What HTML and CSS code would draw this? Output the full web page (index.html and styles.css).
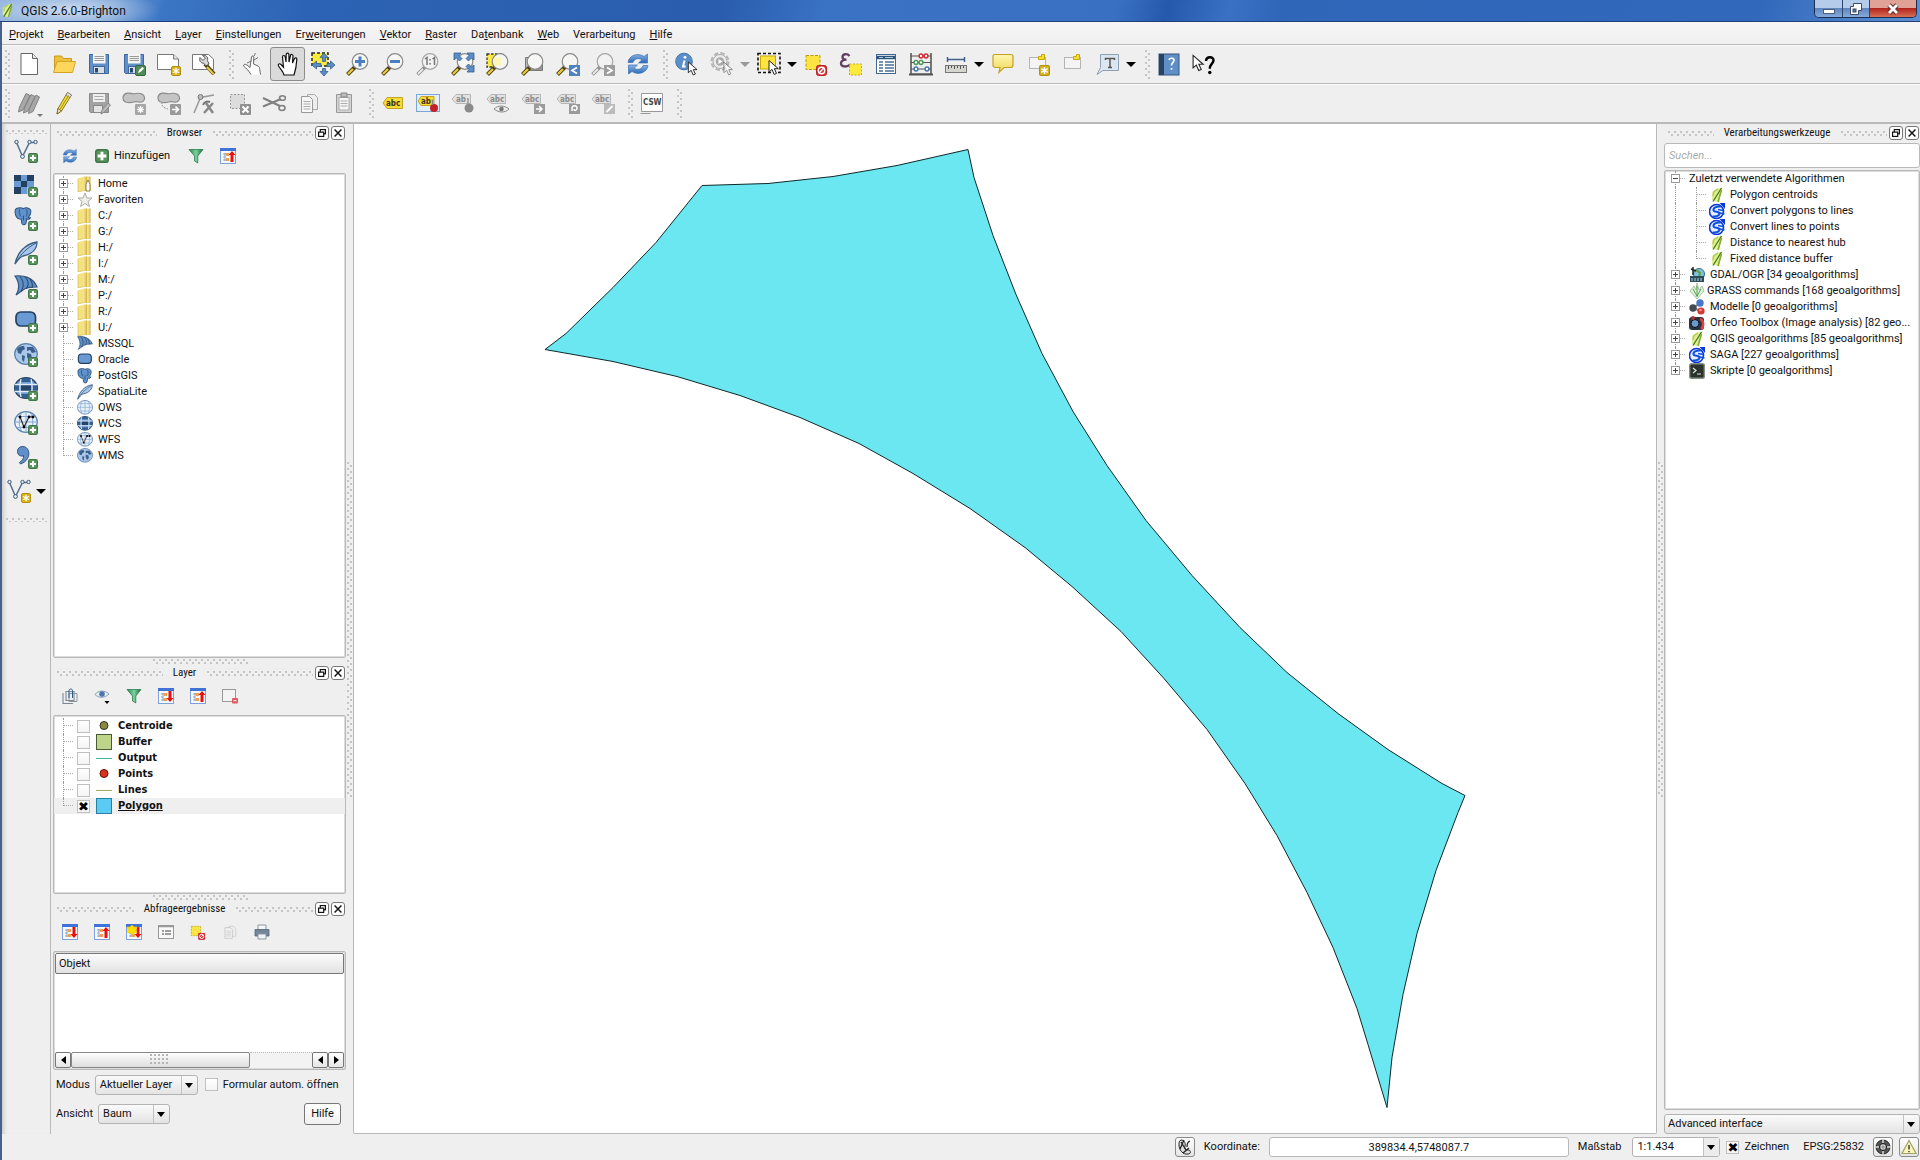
FILE: index.html
```html
<!DOCTYPE html>
<html lang="de">
<head>
<meta charset="utf-8">
<title>QGIS 2.6.0-Brighton</title>
<link rel="stylesheet" href="styles.css">
</head>
<body>
<svg class="defs" aria-hidden="true">
  <defs>
    <linearGradient id="g-fold" x1="0" x2="1" y1="0" y2="0"><stop offset="0" stop-color="#f5e58a"/><stop offset=".5" stop-color="#d2a93a"/><stop offset=".55" stop-color="#fbf0a8"/><stop offset="1" stop-color="#cfae3c"/></linearGradient>
    <linearGradient id="g-blue" x1="0" x2="0" y1="0" y2="1"><stop offset="0" stop-color="#8ab4e4"/><stop offset="1" stop-color="#2c66b4"/></linearGradient>
    <linearGradient id="g-green" x1="0" x2="1" y1="0" y2="0"><stop offset="0" stop-color="#1f8a50"/><stop offset=".5" stop-color="#7fd0a0"/><stop offset="1" stop-color="#146b3a"/></linearGradient>
    <linearGradient id="g-yel" x1="0" x2="0" y1="0" y2="1"><stop offset="0" stop-color="#fdf6b0"/><stop offset="1" stop-color="#f0d858"/></linearGradient>
  </defs>
  <!-- badges shared by several icons -->
  <symbol id="b-plus" viewBox="0 0 9 9"><rect x=".5" y=".5" width="8" height="8" rx="1.5" fill="#5a9560" stroke="#3f7547"/><path d="M4.5 1.7v5.6M1.7 4.5h5.6" stroke="#fff" stroke-width="1.8"/></symbol>
  <symbol id="b-star" viewBox="0 0 10 10"><rect x=".5" y=".5" width="9" height="9" rx="1.5" fill="#d8b21c" stroke="#b08f10"/><path d="M5 1.8v6.4M2 3.3l6 3.4M8 3.3 2 6.7" stroke="#fff" stroke-width="1.3"/></symbol>
  <symbol id="b-no" viewBox="0 0 11 11"><rect x=".5" y=".5" width="10" height="10" rx="2" fill="#d8343a" stroke="#b81f25"/><circle cx="5.500" cy="5.500" r="3.200" fill="none" stroke="#fff" stroke-width="1.400"/><path d="M3.300 7.700 7.700 3.300" stroke="#fff" stroke-width="1.300"/></symbol>
  <symbol id="lens" viewBox="0 0 24 24"><path d="M1.500 22.500 9 15" stroke="#4a3c10" stroke-width="4"/><path d="M2 22 7 17" stroke="#e8c93a" stroke-width="2.400"/><circle cx="14" cy="9.500" r="7.800" fill="#f6f6f4" stroke="#8a8a8a" stroke-width="1.200"/></symbol>
  <symbol id="lens-g" viewBox="0 0 24 24"><path d="M1.500 22.500 9 15" stroke="#8c8c8c" stroke-width="3.600"/><path d="M2 22 7 17" stroke="#ececec" stroke-width="1.800"/><circle cx="14" cy="9.500" r="7.800" fill="#f2f2f2" stroke="#a5a5a5" stroke-width="1.200"/></symbol>
  <symbol id="cursor" viewBox="0 0 12 16"><path d="M1 1v11.500l3-2.600 2.200 5 2.300-1-2.200-4.700h4z" fill="#fff" stroke="#222" stroke-width="1"/></symbol>
  <!-- file toolbar -->
  <symbol id="i-new" viewBox="0 0 24 24"><path d="M4 1.500h11.500l5 5v16H4z" fill="#fff" stroke="#666"/><path d="M15.500 1.500v5h5" fill="#e6e6e6" stroke="#666"/></symbol>
  <symbol id="i-open" viewBox="0 0 24 24"><path d="M2.500 20V4h7l2 2.500h8V20z" fill="#eec13c" stroke="#c59a1d"/><path d="M1.500 20.500 5 9.500h18.500L20.500 20.500z" fill="#ffd65c" stroke="#d2a52a"/></symbol>
  <symbol id="i-save" viewBox="0 0 24 24"><path d="M2.500 2.500h19v19h-18l-1-1z" fill="#5e8fc8" stroke="#3c689e"/><rect x="6" y="2" width="12.500" height="9.500" fill="#f4f4f4"/><path d="M7.500 4.500h9.500M7.500 6.500h9.500M7.500 8.500h9.500" stroke="#999"/><rect x="6.500" y="14.500" width="11" height="7" fill="#d9dde2" stroke="#3c689e"/><rect x="8" y="16" width="3" height="4.500" fill="#27486f"/></symbol>
  <symbol id="i-saveas" viewBox="0 0 24 24"><use href="#i-save"/><rect x="13.500" y="13.500" width="10" height="10" rx="1.500" fill="#4f8c57" stroke="#36683e"/><path d="m16 21 1-3 3.500-3 1.500 1.500-3.500 3.500z" fill="#fff"/></symbol>
  <symbol id="i-compose" viewBox="0 0 24 24"><path d="M.5 2.500h16l5 4.500v10.500H.5z" fill="#fff" stroke="#777"/><path d="M16.500 2.500v4.500h5" fill="#e4e4e4" stroke="#777"/><use href="#b-star" x="14" y="14" width="10" height="10"/></symbol>
  <symbol id="i-composer" viewBox="0 0 24 24"><path d="M.5 2.500h16l5 4.500v10.500H.5z" fill="#fff" stroke="#777"/><path d="m13 12 9 10" stroke="#4a3c10" stroke-width="4"/><path d="m15 15 6.500 7" stroke="#e8d03a" stroke-width="2"/><path d="M8 5.500 11 8.500 13.500 6 10.500 3.500c3-1 6 1.500 5 5L17 12l-3 2-2.500-3C9 11.500 7 9 8 5.500z" fill="#d8d8d8" stroke="#555"/></symbol>
  <!-- navigation toolbar -->
  <symbol id="i-touch" viewBox="0 0 24 24"><path d="M10 22.500C8 19 5.500 16.500 2.500 14c0-1.800 2-2.300 3.500-1l3 2.500L10.500 5c.3-1.500 2.300-1.300 2.300.2L12.500 12l4.500 2c2 1 1.500 3 2.500 8.500" fill="#fff" stroke="#666"/><path d="m13 4 1.500-3M10.500 9 6 11M13 8l4-2.500" stroke="#777"/></symbol>
  <symbol id="i-pan" viewBox="0 0 24 24"><path d="M8 23c-1-4-3-5-5.500-9-.8-2 1-3 2.500-1.500l2.500 2.700L6.500 5c0-2 2.400-2 2.700 0l.8 5L10.200 2.500c.2-1.800 2.600-1.800 2.700 0L13 10l1.500-6.500c.5-1.600 2.600-1.200 2.500.5L16.500 11l2-4.500c.7-1.300 2.500-.7 2.300.9C20.500 14 20 17 18 23z" fill="#fff" stroke="#111" stroke-width="1.200"/></symbol>
  <symbol id="i-pansel" viewBox="0 0 24 24"><rect x="1" y="1" width="16" height="13" fill="#fdea3c" stroke="#222" stroke-width="1.500" stroke-dasharray="3 2"/><path d="m13 1 4 4.500h-2.500v4h-3v-4H9zM13 24l4-4.500h-2.500v-3h-3v3H9zM1 13l4.500-4v2.500H10v3H5.500V17zM24 13l-4.500-4v2.500H16v3h3.500V17z" fill="#5c8dc6" stroke="#345e92" stroke-width=".8"/></symbol>
  <symbol id="i-zin" viewBox="0 0 24 24"><use href="#lens"/><path d="M14 4.500v10M9 9.500h10" stroke="#4a7fc0" stroke-width="3"/></symbol>
  <symbol id="i-zout" viewBox="0 0 24 24"><use href="#lens"/><path d="M9 9.500h10" stroke="#4a7fc0" stroke-width="3"/></symbol>
  <symbol id="i-z11" viewBox="0 0 24 24"><use href="#lens-g"/><path d="m9 7 2-1.500V13M16.500 7l2-1.500V13" fill="none" stroke="#777" stroke-width="1.500"/><path d="M14 7v1.500M14 11v1.500" stroke="#777" stroke-width="1.500"/></symbol>
  <symbol id="i-zfull" viewBox="0 0 24 24"><use href="#lens"/><path d="M3 1h7L8 3.500l3 3L8.500 9l-3-3L3 8zM23 1v7l-2.500-2-3 3L15 6.500l3-3L16 1zM23 20h-7l2-2.500-3-3 2.500-2.500 3 3L23 13z" fill="#5c8dc6" stroke="#345e92" stroke-width=".8"/></symbol>
  <symbol id="i-zsel" viewBox="0 0 24 24"><rect x="1" y="2" width="14" height="13" fill="#fdea3c" stroke="#333" stroke-width="1.300" stroke-dasharray="2.500 1.500"/><use href="#lens"/><path d="M8 5.500h7v8H8z" fill="#fdf6b8"/></symbol>
  <symbol id="i-zlay" viewBox="0 0 24 24"><path d="M4.500 5.500h13v13h-13z" fill="#bbb" stroke="#777"/><path d="M7.500 8.500h14v10h-14z" fill="#999" stroke="#777"/><use href="#lens"/></symbol>
  <symbol id="i-zlast" viewBox="0 0 24 24"><use href="#lens"/><rect x="13" y="13" width="11" height="11" fill="#4f83bd"/><path d="m21 15.500-5 3 5 3" fill="none" stroke="#fff" stroke-width="1.700"/></symbol>
  <symbol id="i-znext" viewBox="0 0 24 24"><use href="#lens-g"/><rect x="13" y="13" width="11" height="11" fill="#9d9d9d"/><path d="m16 15.500 5 3-5 3" fill="none" stroke="#fff" stroke-width="1.700"/></symbol>
  <symbol id="i-refresh" viewBox="0 0 24 24"><path d="M2 10.500C3 3 12 .500 18 4.500L21.500 2v9h-9L16 7.700C12 5.500 8 7 7 10.500z" fill="url(#g-blue)" stroke="#3c72b8" stroke-width=".7"/><path d="M22 13.500C21 21 12 23.500 6 19.500L2.500 22v-9h9L8 16.300c4 2.200 8 .7 9-2.800z" fill="url(#g-blue)" stroke="#3c72b8" stroke-width=".7"/></symbol>
  <!-- attributes toolbar -->
  <symbol id="i-info" viewBox="0 0 24 24"><circle cx="9" cy="9.500" r="8.300" fill="#5a8fcb" stroke="#3f72ac"/><path d="M9.500 8.500 8 14.500h2.500" fill="none" stroke="#fff" stroke-width="2"/><circle cx="10" cy="5.300" r="1.400" fill="#fff"/><use href="#cursor" x="12" y="9" width="12" height="15"/></symbol>
  <symbol id="i-action" viewBox="0 0 24 24"><circle cx="10" cy="9.500" r="8.500" fill="#eee" stroke="#b5b5b5" stroke-width="2" stroke-dasharray="4.500 2.200"/><circle cx="10" cy="9.500" r="7" fill="#ececec" stroke="#aaa"/><circle cx="10" cy="9.500" r="4.200" fill="#aaa"/><path d="m8.500 7 4 2.500-4 2.500z" fill="#fff"/><g opacity=".5"><use href="#cursor" x="13" y="9" width="11" height="15"/></g></symbol>
  <symbol id="i-select" viewBox="0 0 24 24"><rect x="1" y="1.500" width="22" height="19" fill="none" stroke="#111" stroke-width="1.600" stroke-dasharray="3 2"/><rect x="3.500" y="4" width="15" height="13" fill="#fde440" stroke="#c9a800"/><use href="#cursor" x="11" y="7" width="12" height="17"/></symbol>
  <symbol id="i-desel" viewBox="0 0 24 24"><rect x="2" y="3.500" width="14" height="14" fill="#fde440" stroke="#b39a10" stroke-dasharray="3 1.500"/><use href="#b-no" x="12" y="13" width="11" height="11"/></symbol>
  <symbol id="i-expr" viewBox="0 0 24 24"><path d="M10.500 4C8 1 3.500 2 3.500 5c0 2 1.500 2.700 4 2.700C4 7.700 2 9 2 11.500c0 3.500 6 4 9 1" fill="none" stroke="#63405f" stroke-width="2.300"/><rect x="10.500" y="12" width="12" height="11" fill="#fdea3c" stroke="#c5ab20" stroke-dasharray="2 1.500"/></symbol>
  <symbol id="i-table" viewBox="0 0 24 24"><rect x="2.500" y="2.500" width="19" height="19" fill="#fff" stroke="#41668f"/><path d="M3 5.500h18" stroke="#2e5379" stroke-width="3.500"/><path d="M5 10h4M11 10h9M5 13h4M11 13h9M5 16h4M11 16h9M5 19h4M11 19h9" stroke="#4a6f99" stroke-width="1.300"/><path d="M5 5.500h4m2 0h8" stroke="#a8c6e8"/></symbol>
  <symbol id="i-abacus" viewBox="0 0 24 24"><path d="M2 1v21M22 1v21" stroke="#444" stroke-width="1.400"/><path d="M1 22h22M2 4h20M2 10.500h20M2 17h20" stroke="#555"/><path d="M0 22.500h24" stroke="#555" stroke-width="2"/><g fill="#fff" stroke-width="1.500"><g stroke="#cf2f36"><circle cx="12" cy="4" r="1.900"/><circle cx="17" cy="4" r="1.900"/></g><g stroke="#51975a"><circle cx="7" cy="10.500" r="1.900"/><circle cx="12" cy="10.500" r="1.900"/></g><g stroke="#4a77a8"><circle cx="7" cy="17" r="1.900"/><circle cx="18" cy="17" r="1.900"/></g></g></symbol>
  <symbol id="i-measure" viewBox="0 0 24 24"><path d="M3.500 7.500h17M3.500 5v5M20.500 5v5" stroke="#3d5f8a" stroke-width="1.500"/><rect x="1.500" y="13.500" width="21" height="7" fill="#d5d5d0" stroke="#777"/><path d="M4.500 14v3M7.500 14v2M10.500 14v3M13.500 14v2M16.500 14v3M19.500 14v2" stroke="#555"/></symbol>
  <symbol id="i-tip" viewBox="0 0 24 24"><path d="M4 2.500h16q2 0 2 2V13q0 2.500-2.500 2.500H13L8 20.500l1-5H4.500Q2 15.500 2 13V4.500q0-2 2-2z" fill="url(#g-yel)" stroke="#c4a02a" stroke-width="1.200"/></symbol>
  <symbol id="i-bm" viewBox="0 0 24 24"><rect x="3.500" y="5.500" width="16" height="11" fill="#f4f4f4" stroke="#777" stroke-dasharray="1 1"/><path d="M12.500 7.500v-3h3v-2h3v5z" fill="#f8dc38" stroke="#c9a800"/></symbol>
  <symbol id="i-bmnew" viewBox="0 0 24 24"><use href="#i-bm"/><use href="#b-star" x="13" y="13" width="11" height="11"/></symbol>
  <symbol id="i-text" viewBox="0 0 24 24"><path d="M4.500 2.500h18v16H7l-6 4 3.500-7z" fill="#dce6f0" stroke="#8da0b5"/><path d="M9.500 8V6.500h9V8M14 6.500v9M12 15.500h4" fill="none" stroke="#555" stroke-width="1.500"/></symbol>
  <symbol id="i-book" viewBox="0 0 24 24"><rect x="2" y="2" width="20" height="21" fill="#5f8fc6" stroke="#34567f"/><rect x="2" y="2" width="5" height="21" fill="#29425f"/><path d="M12 8c.5-2.500 5.500-2.500 5 .5-.3 2-2.500 2-2.500 5M14.500 16v1.700" fill="none" stroke="#fff" stroke-width="1.600"/></symbol>
  <symbol id="i-what" viewBox="0 0 24 24"><use href="#cursor" x="0" y="1" width="13" height="20"/><path d="M14 9c.3-5 8-5 7.500-.3-.3 3-3.700 3.300-3.700 8" fill="none" stroke="#000" stroke-width="2.400"/><circle cx="17.800" cy="20.500" r="1.700"/></symbol>
  <!-- editing toolbar -->
  <symbol id="pencil" viewBox="0 0 24 24"><path d="m5 23 1-5.500L15.500 1.500l4 2.500L9.500 20z" fill="#f2dc3f" stroke="#8d7a1c"/><path d="m5 23 1-5.500 3.500 2.500z" fill="#f3e6c4" stroke="#6b5a1a" stroke-width=".8"/><path d="m15.500 1.500 4 2.500-1.500 2.500-4-2.300z" fill="#e8e8e8" stroke="#777" stroke-width=".8"/><path d="m8 18.500 8.500-14" stroke="#a98e14"/></symbol>
  <symbol id="i-pencils" viewBox="0 0 24 24"><g fill="#a8a8a8" stroke="#828282"><path d="m1.500 21 1-5L9 2.500l4 2L6 19z"/><path d="m6.500 22 1-5L14 3.500l4 2L11 20z"/><path d="m11.500 22.500 1-5L19 4l3.500 2L16 20.500z"/></g></symbol>
  <symbol id="i-saveed" viewBox="0 0 24 24"><path d="M2.500 2.500h19v19h-18l-1-1z" fill="#a3a3a3" stroke="#8a8a8a"/><rect x="6" y="3" width="12" height="8" fill="#efefef"/><path d="M7.500 5.500h9M7.500 8.500h9" stroke="#aaa"/><rect x="6.500" y="14.500" width="9" height="7" fill="#e4e4e4" stroke="#8a8a8a"/><path d="m14 23 1-4 6-7 2.500 2-6 7z" fill="#bbb" stroke="#888"/></symbol>
  <symbol id="blob" viewBox="0 0 24 24"><path d="M3.500 11C-.5 9 .5 3 5 2.200c3-.7 5 1.300 9 .3 5-1 8 1 8.500 4 .5 4-3 5-6 4.500-2-.5-3-.5-5 0-2 .8-5.500.8-8 0z" fill="#c4c4c4" stroke="#8b8b8b" stroke-width="1.200"/></symbol>
  <symbol id="i-addf" viewBox="0 0 24 24"><use href="#blob"/><rect x="13" y="13" width="11" height="11" rx="1" fill="#a6a6a6"/><path d="M18.500 15v7M15 18.500h7M16 16l5 5M21 16l-5 5" stroke="#fff" stroke-width="1.200"/></symbol>
  <symbol id="i-movef" viewBox="0 0 24 24"><use href="#blob"/><path d="M5 11c-1 4 2 6 6 7" fill="none" stroke="#999" stroke-dasharray="2 1"/><rect x="13" y="13" width="11" height="11" rx="1" fill="#9a9a9a"/><path d="M15 18.500h6M18.500 15.500l3 3-3 3" fill="none" stroke="#fff" stroke-width="1.700"/></symbol>
  <symbol id="i-node" viewBox="0 0 24 24"><path d="M2 22 8.500 6.500 22 4" fill="none" stroke="#999" stroke-width="1.500"/><circle cx="8.500" cy="6" r="2.500" fill="#bbb" stroke="#777"/><path d="m12 22 9-10M14 12l7 10" stroke="#888" stroke-width="2.500"/><path d="M11 14c1-3 4-4 7-3" fill="none" stroke="#777" stroke-width="2"/></symbol>
  <symbol id="i-delf" viewBox="0 0 24 24"><rect x="3.500" y="3.500" width="14" height="14" fill="#dcdcdc" stroke="#999" stroke-dasharray="2 1.500"/><rect x="13" y="13" width="11" height="11" rx="1" fill="#909090"/><path d="m15.500 15.500 6 6m0-6-6 6" stroke="#fff" stroke-width="2"/></symbol>
  <symbol id="i-cut" viewBox="0 0 24 24"><path d="m1 7 17 8M1 15.500 19 8" stroke="#808080" stroke-width="2"/><ellipse cx="20.500" cy="7" rx="3" ry="2.300" fill="none" stroke="#808080" stroke-width="1.600"/><ellipse cx="20" cy="17" rx="3" ry="2.500" fill="none" stroke="#808080" stroke-width="1.600"/></symbol>
  <symbol id="i-copy" viewBox="0 0 24 24"><path d="M10.500 3.500h7l3 3v12h-10z" fill="#eee" stroke="#aaa"/><path d="M4.500 5.500h8l3 3v13h-11z" fill="#f7f7f7" stroke="#999"/><path d="M6.500 10.500h7M6.500 13h7M6.500 15.500h7M6.500 18h7" stroke="#aaa"/></symbol>
  <symbol id="i-paste" viewBox="0 0 24 24"><path d="M4.500 3.500h15v18h-15z" fill="#d4d4d4" stroke="#999"/><path d="M7 6.500h10v12.500H7z" fill="#f7f7f7" stroke="#aaa"/><path d="M9 2h6v4H9z" fill="#bbb" stroke="#888"/><path d="M8.500 10h7M8.500 12.500h7M8.500 15h7" stroke="#aaa"/></symbol>
  <!-- label tags: the lettering is set as text beside them -->
  <symbol id="tag-y" viewBox="0 0 24 24"><path d="M2 12 6 6.500h15.500v11H6z" fill="#f7dc35" stroke="#c4a41c"/></symbol>
  <symbol id="tag-g" viewBox="0 0 24 24"><path d="M1 8 5 3.500h14.500v9H5z" fill="#e2e2e2" stroke="#b5b5b5"/></symbol>
  <!-- layer toolbar -->
  <symbol id="vnet" viewBox="0 0 24 24"><path d="m2.500 3.500 6 14 7-14h5" fill="none" stroke="#54708f" stroke-width="1.500"/><g fill="#e8eef4" stroke="#3d5877"><circle cx="2.500" cy="3" r="1.700"/><circle cx="8.500" cy="17.500" r="1.900"/><circle cx="15.500" cy="3" r="1.700"/><circle cx="21.500" cy="3" r="1.700"/></g></symbol>
  <symbol id="globe" viewBox="0 0 24 24"><ellipse cx="12" cy="11" rx="11.300" ry="10.300" fill="#e9f1fa" stroke="#5d84b3" stroke-width="1.200"/><path d="M1 11h22M3 5.500h18M3 16.500h18M12 1v20M7.500 2C4.500 8 4.500 14 7.500 20M16.500 2c3 6 3 12 0 18" fill="none" stroke="#86a9d2"/></symbol>
  <symbol id="globe-d" viewBox="0 0 24 24"><ellipse cx="12" cy="11" rx="11.300" ry="10.300" fill="#6f9fd6" stroke="#24405f" stroke-width="1.400"/><path d="M7 8h10v6H7z" fill="#24456b"/><path d="M1.500 8h5v6h-5zM17.500 8h5v6h-5zM7 1.500h10V5H7zM7 17h10v3.500H7z" fill="#345f92"/><path d="M1 7.500h22M1 14.500h22M7 2c-1.500 6-1.500 12 0 18M17 2c1.500 6 1.500 12 0 18" fill="none" stroke="#e4eef8" stroke-width="1.300"/></symbol>
  <symbol id="globe-m" viewBox="0 0 24 24"><ellipse cx="12" cy="11" rx="11.300" ry="10.300" fill="#a9c8ea" stroke="#5b7fa8" stroke-width="1.200"/><path d="M3 6c2-3 5-3 7-3l1 3-3 2-1 3-3-1zM8 12l3 1-1 6-2-2zM13 4l6 0 3 5-4 1-2-3-3 1zM13 10l4 1 1 4-3 3-2-4z" fill="#3c608b"/></symbol>
  <symbol id="elephant" viewBox="0 0 24 24"><path d="M3 2c4-2 7-1 9 0 3-2 8-1 9 2 1 4-1 7-3 9 1 1 2 1 3 0-1 3-3 3-5 2l-1 6c-2 2-4 2-5 0l-1-6c-3 1-6-1-7-5C1 6 1 3 3 2z" fill="#5f92cc" stroke="#2d5078" stroke-width="1.300"/><path d="M7 3c-1 4 0 7 2 9M16 3c1 4 1 7-1 9M12 11v6" fill="none" stroke="#2d5078" stroke-width="1.200"/></symbol>
  <symbol id="feather" viewBox="0 0 24 24"><path d="M1 23C3 13 10 3 23 1c0 6-4 12-14 14-3 1-5 4-8 8z" fill="#a7c7ea" stroke="#3c5d83" stroke-width="1.300"/><path d="M2 21C7 13 13 7 22 2" stroke="#3c5d83" fill="none"/></symbol>
  <symbol id="fan" viewBox="0 0 24 24"><path d="M1 1c8-1 18 1 22 11-6 0-10 0-14 3l-7 5c4-6 3-13-1-19z" fill="#5f8fc8" stroke="#33557d" stroke-width="1.200"/><path d="M6 1.500c4 5 4 10 1 15M11 2c4 4 4 8 1 12M16 4c2 3 3 6 2 9" fill="none" stroke="#24405f"/></symbol>
  <symbol id="oracle" viewBox="0 0 24 24"><rect x="2" y="3" width="19.500" height="14" rx="5" fill="#6a9ad4" stroke="#24405f" stroke-width="1.700"/></symbol>
  <symbol id="raster" viewBox="0 0 24 24"><path d="M0 2h20v19H0z" fill="#6a9ad4"/><path d="M0 2h7v6H0zM13 2h7v6h-7zM7 8h6v6H7zM0 14h7v7H0z" fill="#24405f"/><path d="M13 14h7v7h-7z" fill="#a9c8ea"/></symbol>
  <symbol id="comma" viewBox="0 0 24 24"><circle cx="8.500" cy="6.500" r="5" fill="#5f8fc8"/><path d="M8.500 1.500c6 0 8 7 5 12-1.500 2.700-4 4.500-7 5.500l-1-1.500c3-2 4.500-4.500 4-7-3 1.500-6-.5-6-4s2.500-5 5-5z" fill="#5f8fc8" stroke="#33557d"/></symbol>
  <symbol id="i-vec" viewBox="0 0 24 24"><use href="#vnet"/><use href="#b-plus" x="14" y="14" width="10" height="10"/></symbol>
  <symbol id="i-ras" viewBox="0 0 24 24"><use href="#raster"/><use href="#b-plus" x="14" y="14" width="10" height="10"/></symbol>
  <symbol id="i-pg" viewBox="0 0 24 24"><use href="#elephant" x="0" y="0" width="19" height="19"/><use href="#b-plus" x="14" y="14" width="10" height="10"/></symbol>
  <symbol id="i-spl" viewBox="0 0 24 24"><use href="#feather"/><use href="#b-plus" x="14" y="14" width="10" height="10"/></symbol>
  <symbol id="i-ms" viewBox="0 0 24 24"><use href="#fan"/><use href="#b-plus" x="14" y="14" width="10" height="10"/></symbol>
  <symbol id="i-ora" viewBox="0 0 24 24"><use href="#oracle"/><use href="#b-plus" x="14" y="14" width="10" height="10"/></symbol>
  <symbol id="i-wms" viewBox="0 0 24 24"><use href="#globe-m"/><use href="#b-plus" x="14" y="14" width="10" height="10"/></symbol>
  <symbol id="i-wcs" viewBox="0 0 24 24"><use href="#globe-d"/><use href="#b-plus" x="14" y="14" width="10" height="10"/></symbol>
  <symbol id="wfs" viewBox="0 0 24 24"><use href="#globe"/><path d="m6 6 4 10 5-10h4" fill="none" stroke="#333" stroke-width="1.200"/><circle cx="6" cy="6" r="1.400"/><circle cx="10" cy="16" r="1.400"/><circle cx="15" cy="6" r="1.400"/><circle cx="19" cy="6" r="1.400"/></symbol>
  <symbol id="i-wfs" viewBox="0 0 24 24"><use href="#wfs"/><use href="#b-plus" x="14" y="14" width="10" height="10"/></symbol>
  <symbol id="i-csv" viewBox="0 0 24 24"><use href="#comma"/><use href="#b-plus" x="14" y="14" width="10" height="10"/></symbol>
  <symbol id="i-vnew" viewBox="0 0 24 24"><use href="#vnet"/><use href="#b-star" x="14" y="14" width="10" height="10"/></symbol>
  <!-- panel icons, 16 px grid -->
  <symbol id="s-folder" viewBox="0 0 16 16"><path d="M1 2.500 7 .5v14L1 16z" fill="#f3e182"/><path d="M7 .5h6.500V15H7z" fill="url(#g-fold)"/><path d="M1 2.500V16l6-1.500" fill="none" stroke="#d9be55" stroke-width=".7"/></symbol>
  <symbol id="s-home" viewBox="0 0 16 16"><use href="#s-folder"/><path d="M9 15V8l2-4 2 4v7z" fill="#fff" stroke="#8a7030" stroke-width=".9"/></symbol>
  <symbol id="s-star" viewBox="0 0 16 16"><path d="m8 1 2 5h5l-4 3.500 1.500 5L8 11.500l-4.500 3 1.500-5L1 6h5z" fill="#eeeeea" stroke="#a5a59d" stroke-width=".9"/></symbol>
  <symbol id="s-filter" viewBox="0 0 16 16"><path d="M1 1.500h14L9.800 8v7l-3.300-2V8z" fill="url(#g-green)" stroke="#1b7242" stroke-width=".7"/></symbol>
  <symbol id="s-win" viewBox="0 0 16 16"><rect x=".5" y=".5" width="15" height="15" fill="#f7faff" stroke="#7ea0dc"/><path d="M0 0h16v3H0z" fill="#3f74d6"/><path d="M3 6h3M3 9h2M3 12h3M5 5v8" stroke="#8aa0c0"/><path d="M6 5h3v3H6zM6 10h3v3H6z" fill="#f0a050"/></symbol>
  <symbol id="s-col" viewBox="0 0 16 16"><use href="#s-win"/><path d="m12 3 3.500 4h-2v7h-3V7h-2z" fill="#e81010"/></symbol>
  <symbol id="s-exp" viewBox="0 0 16 16"><use href="#s-win"/><path d="m12 14 3.500-4h-2V3h-3v7h-2z" fill="#e81010"/></symbol>
  <symbol id="s-expnew" viewBox="0 0 16 16"><use href="#s-exp"/><path d="m6 1 2 2 3 0-1 3 1 3-3 0-2 2-2-2-3-1 1-2-1-3 3 0z" fill="#fde000" stroke="#f0c000" stroke-width=".6"/></symbol>
  <symbol id="s-group" viewBox="0 0 16 16"><path d="M1 5v10.500h10M4 3.500h8v9H4z" fill="none" stroke="#7d8793" stroke-width="1.100"/><path d="M7 5.500h8v8H7z" fill="none" stroke="#8d97a3"/><path d="M7 10V2.500c0-2 3.500-2 3.500 0V10" fill="none" stroke="#2f5a8c"/></symbol>
  <symbol id="s-eye" viewBox="0 0 16 16"><path d="M1 6.500C4 2 11 2 15 6c-4 4-10 4.500-14 .5z" fill="#e9eef4" stroke="#8aa0b8"/><circle cx="8" cy="6" r="2.800" fill="#4d77a8"/><path d="m10.500 13 5 0-2.500 3z" fill="#000"/></symbol>
  <symbol id="s-rem" viewBox="0 0 16 16"><rect x=".5" y="1.500" width="13" height="12" fill="#f3f3f3" stroke="#9a9a9a"/><rect x="10" y="10" width="6" height="5.500" rx="1" fill="#df5c63"/><path d="M11.500 12.700h3" stroke="#fff"/></symbol>
  <symbol id="s-form" viewBox="0 0 16 16"><rect x=".5" y="1.500" width="15" height="13" fill="#f8f8f8" stroke="#999"/><path d="M.5 2.500h15" stroke="#999" stroke-width="1.500"/><path d="M4 7h2M7 7h6M4 10h2M7 10h6" stroke="#444"/></symbol>
  <symbol id="s-print" viewBox="0 0 16 16"><path d="M4 1h8v5H4z" fill="#f4f6f8" stroke="#8c98a5"/><path d="M1 5.500h14V12H1z" fill="#728599" stroke="#566879" stroke-width=".8"/><path d="M4 10h8v5H4z" fill="#f0f3f6" stroke="#8c98a5"/></symbol>
  <symbol id="s-qgis" viewBox="0 0 16 16"><path d="M3 5 9 1.500l4.500-1-2 7-1.500 8-5-1.500-2-1z" fill="#e0ee9c"/><path d="M4 14.500 12.500 1" stroke="#4c7f14" stroke-width="1.400"/><path d="M9 15l3.500-12" stroke="#86ad2c" stroke-width="1.600"/><path d="m4 9 1-4.500 4-2.500" fill="none" stroke="#b4cf5c" stroke-width="1.500"/></symbol>
  <symbol id="s-saga" viewBox="0 0 16 16"><circle cx="7.500" cy="8.500" r="7" fill="#e8f2ff" stroke="#0b36d8" stroke-width="1.600"/><path d="M12 3.500C7 3 4 5 4.500 7.500 5.500 9.500 9 8 10.500 10c.5 2-2 4-7 3.500" fill="none" stroke="#1050e0" stroke-width="2"/><path d="M8.500 9.500 15.500 11M9 6.500l5.500 1" stroke="#1050e0" stroke-width="1.500"/><path d="M10.500 0H16v6z" fill="#0b36d8"/></symbol>
  <symbol id="s-gdal" viewBox="0 0 16 16"><circle cx="10" cy="7" r="5.500" fill="#7ac4e0" stroke="#376a7e"/><path d="M7 3l4 3-1 4 3 1" stroke="#6f9a3c" stroke-width="2" fill="none"/><path d="M1 9h14v6H1z" fill="#2c4c5a"/><path d="M2 2l5 2M4 0v8" stroke="#222" stroke-width="1.500"/><path d="M3 11v3M6 11v3M9 11v3M12 11v3" stroke="#b8dce8"/></symbol>
  <symbol id="s-grass" viewBox="0 0 16 16"><path d="m1 8 4-5 2 4 1-7 2 7 3-4 2 5-7 8z" fill="#dff0da" stroke="#8fb98a" stroke-width=".8"/><path d="M8 14V3M8 13 4 6M8 13l4-7" stroke="#4b9a4c" stroke-width=".9"/></symbol>
  <symbol id="s-model" viewBox="0 0 16 16"><path d="m4 9 6-4M4 9l8 3" stroke="#888" stroke-width="2"/><circle cx="4" cy="9" r="3.700" fill="#444b55"/><circle cx="11" cy="4" r="3.700" fill="#4677c8"/><circle cx="12" cy="12" r="3.600" fill="#d83434"/><circle cx="11.500" cy="11" r="1.300" fill="#f3a0a0"/></symbol>
  <symbol id="s-otb" viewBox="0 0 16 16"><rect x="0" y="2" width="15" height="13" rx="3" fill="#2c3340"/><circle cx="6" cy="8.500" r="4" fill="#6a9ad0" stroke="#111"/><path d="M11 4c4 1 4 8 1 10" fill="none" stroke="#e04040" stroke-width="2.500"/><circle cx="4" cy="3" r="2" fill="#b03030"/></symbol>
  <symbol id="s-script" viewBox="0 0 16 16"><rect x=".7" y=".7" width="14.600" height="14.600" rx="1.500" fill="#2b332c" stroke="#8a8f88" stroke-width="1.400"/><path d="m4 5 3 2.500L4 10M8 11h4" fill="none" stroke="#dfe8df" stroke-width="1.200"/></symbol>
  <symbol id="s-float" viewBox="0 0 14 14"><rect x="5" y="3" width="6" height="5" fill="#fff" stroke="#111" stroke-width="1.400"/><rect x="3" y="6" width="6" height="5" fill="#fff" stroke="#111" stroke-width="1.400"/></symbol>
  <symbol id="s-close" viewBox="0 0 14 14"><path d="m3 3 8 8m0-8-8 8" stroke="#111" stroke-width="1.700"/></symbol>
</svg>

<header class="titlebar">
  <svg class="i16"><use href="#s-qgis"/></svg>
  <span class="titlebar-text">QGIS 2.6.0-Brighton</span>
  <div class="winbtns">
    <button class="wb wb-min" aria-label="Minimieren"><svg width="14" height="14" viewBox="0 0 14 14"><rect x="1.500" y="7.500" width="11" height="4" fill="#fff" stroke="#4b5f7c"/></svg></button>
    <button class="wb" aria-label="Wiederherstellen"><svg width="14" height="14" viewBox="0 0 14 14"><path d="M4.500 1.500h8v7h-3v4h-8v-8h3z" fill="#fff" stroke="#3b4d68"/><rect x="4" y="7" width="3" height="3" fill="#5a7298" stroke="#3b4d68"/></svg></button>
    <button class="wb wb-close" aria-label="Schließen"><svg width="14" height="14" viewBox="0 0 14 14"><path d="m3 3 8 8m0-8-8 8" stroke="#5d2a2c" stroke-width="4.600"/><path d="m3 3 8 8m0-8-8 8" stroke="#fff" stroke-width="2.800"/></svg></button>
  </div>
</header>

<div class="window">
<nav class="menubar">
  <a href="#"><u>P</u>rojekt</a><a href="#"><u>B</u>earbeiten</a><a href="#"><u>A</u>nsicht</a><a href="#"><u>L</u>ayer</a><a href="#"><u>E</u>instellungen</a><a href="#">Er<u>w</u>eiterungen</a><a href="#"><u>V</u>ektor</a><a href="#"><u>R</u>aster</a><a href="#">Da<u>t</u>enbank</a><a href="#"><u>W</u>eb</a><a href="#">Verarbeitung</a><a href="#"><u>H</u>ilfe</a>
</nav>

<div class="toolbar">
  <span class="grip"></span>
  <button class="tb" aria-label="Neu"><svg><use href="#i-new"/></svg></button>
  <button class="tb" aria-label="Öffnen"><svg><use href="#i-open"/></svg></button>
  <button class="tb" aria-label="Speichern"><svg><use href="#i-save"/></svg></button>
  <button class="tb" aria-label="Speichern als"><svg><use href="#i-saveas"/></svg></button>
  <button class="tb" aria-label="Neue Druckzusammenstellung"><svg><use href="#i-compose"/></svg></button>
  <button class="tb" aria-label="Druckzusammenstellungen"><svg><use href="#i-composer"/></svg></button>
  <span class="grip"></span>
  <button class="tb" aria-label="Touch"><svg><use href="#i-touch"/></svg></button>
  <button class="tb active" aria-label="Karte verschieben"><svg><use href="#i-pan"/></svg></button>
  <button class="tb" aria-label="Zur Auswahl verschieben"><svg><use href="#i-pansel"/></svg></button>
  <button class="tb" aria-label="Hineinzoomen"><svg><use href="#i-zin"/></svg></button>
  <button class="tb" aria-label="Hinauszoomen"><svg><use href="#i-zout"/></svg></button>
  <button class="tb" aria-label="Native Auflösung"><svg><use href="#i-z11"/></svg></button>
  <button class="tb" aria-label="Volle Ausdehnung"><svg><use href="#i-zfull"/></svg></button>
  <button class="tb" aria-label="Zur Auswahl zoomen"><svg><use href="#i-zsel"/></svg></button>
  <button class="tb" aria-label="Auf Layer zoomen"><svg><use href="#i-zlay"/></svg></button>
  <button class="tb" aria-label="Zoom zurück"><svg><use href="#i-zlast"/></svg></button>
  <button class="tb" aria-label="Zoom vor"><svg><use href="#i-znext"/></svg></button>
  <button class="tb" aria-label="Aktualisieren"><svg><use href="#i-refresh"/></svg></button>
  <span class="grip"></span>
  <button class="tb" aria-label="Objekte abfragen"><svg><use href="#i-info"/></svg></button>
  <button class="tb drop off" aria-label="Aktion ausführen"><svg><use href="#i-action"/></svg></button>
  <button class="tb drop" aria-label="Objekte wählen"><svg><use href="#i-select"/></svg></button>
  <button class="tb" aria-label="Auswahl aufheben"><svg><use href="#i-desel"/></svg></button>
  <button class="tb" aria-label="Über Ausdruck wählen"><svg><use href="#i-expr"/></svg></button>
  <button class="tb" aria-label="Attributtabelle"><svg><use href="#i-table"/></svg></button>
  <button class="tb" aria-label="Feldrechner"><svg><use href="#i-abacus"/></svg></button>
  <button class="tb drop" aria-label="Messen"><svg><use href="#i-measure"/></svg></button>
  <button class="tb" aria-label="Kartenhinweise"><svg><use href="#i-tip"/></svg></button>
  <button class="tb" aria-label="Neues Lesezeichen"><svg><use href="#i-bmnew"/></svg></button>
  <button class="tb" aria-label="Lesezeichen"><svg><use href="#i-bm"/></svg></button>
  <button class="tb drop" aria-label="Textbeschriftung"><svg><use href="#i-text"/></svg></button>
  <span class="grip"></span>
  <button class="tb" aria-label="Hilfe"><svg><use href="#i-book"/></svg></button>
  <button class="tb" aria-label="Was ist das?"><svg><use href="#i-what"/></svg></button>
</div>

<div class="toolbar">
  <span class="grip"></span>
  <button class="tb" aria-label="Aktuelle Änderungen"><svg><use href="#i-pencils"/></svg><i class="tiny"></i></button>
  <button class="tb" aria-label="Bearbeitungsstatus"><svg><use href="#pencil"/></svg></button>
  <button class="tb" aria-label="Layeränderungen speichern"><svg><use href="#i-saveed"/></svg></button>
  <button class="tb" aria-label="Objekt hinzufügen"><svg><use href="#i-addf"/></svg></button>
  <button class="tb" aria-label="Objekt verschieben"><svg><use href="#i-movef"/></svg></button>
  <button class="tb" aria-label="Knotenwerkzeug"><svg><use href="#i-node"/></svg></button>
  <button class="tb" aria-label="Ausgewähltes löschen"><svg><use href="#i-delf"/></svg></button>
  <button class="tb" aria-label="Ausschneiden"><svg><use href="#i-cut"/></svg></button>
  <button class="tb" aria-label="Kopieren"><svg><use href="#i-copy"/></svg></button>
  <button class="tb" aria-label="Einfügen"><svg><use href="#i-paste"/></svg></button>
  <span class="grip"></span>
  <button class="tb" aria-label="Beschriftung"><svg viewBox="0 0 24 24"><use href="#tag-y"/><text class="tag" x="5" y="15">abc</text></svg></button>
  <button class="tb" aria-label="Beschriftungen hervorheben"><svg viewBox="0 0 24 24"><rect x=".5" y="3.500" width="23" height="17" fill="#e4eef8" stroke="#7ba6d8"/><path d="m2 10 3-4.500h13v9H5z" fill="#f7dc35" stroke="#c4a41c"/><text class="tag" x="5" y="13">ab</text><circle cx="18" cy="17" r="4" fill="#c42127"/><path d="M16.500 14V8.500" stroke="#888" stroke-width="1.500"/></svg></button>
  <button class="tb" aria-label="Beschriftungen fixieren"><svg viewBox="0 0 24 24"><use href="#tag-g"/><text class="tag tag-off" x="5" y="11">ab</text><circle cx="18" cy="17" r="4.500" fill="#8a8a8a"/><path d="M17 13V7" stroke="#999" stroke-width="1.500"/></svg></button>
  <button class="tb" aria-label="Beschriftungen anzeigen"><svg viewBox="0 0 24 24"><use href="#tag-g"/><text class="tag tag-off" x="4" y="11">abc</text><path d="M8 18c4-4 10-4 15 0-4 4-10 4-15 0z" fill="#eee" stroke="#888"/><circle cx="15.500" cy="18" r="2.300" fill="#777"/></svg></button>
  <button class="tb" aria-label="Beschriftung verschieben"><svg viewBox="0 0 24 24"><use href="#tag-g"/><text class="tag tag-off" x="4" y="11">abc</text><rect x="13" y="13" width="11" height="10" fill="#9a9a9a"/><path d="M15 18h6m-3-3 3 3-3 3" fill="none" stroke="#fff" stroke-width="1.500"/></svg></button>
  <button class="tb" aria-label="Beschriftung drehen"><svg viewBox="0 0 24 24"><use href="#tag-g"/><text class="tag tag-off" x="4" y="11">abc</text><rect x="13" y="13" width="11" height="10" fill="#9a9a9a"/><path d="M16 20v-3c0-3 5-3 5 0s-3 3-3 1" fill="none" stroke="#fff" stroke-width="1.500"/></svg></button>
  <button class="tb" aria-label="Beschriftung ändern"><svg viewBox="0 0 24 24"><use href="#tag-g"/><text class="tag tag-off" x="4" y="11">abc</text><rect x="13" y="13" width="11" height="10" fill="#bbb"/><path d="m15.500 21 6-6" stroke="#fff" stroke-width="2"/></svg></button>
  <span class="grip"></span>
  <button class="tb" aria-label="Metadatensuche"><svg viewBox="0 0 24 24"><path d="M.5 22.500h10M1.500 2.500h21v18h-21z" fill="#fff" stroke="#999"/><text class="csw" x="3" y="14">CSW</text></svg></button>
  <span class="grip"></span>
</div>

<main class="work">
  <div class="layerbar">
    <span class="hgrip"></span>
    <button aria-label="Vektorlayer"><svg><use href="#i-vec"/></svg></button>
    <button aria-label="Rasterlayer"><svg><use href="#i-ras"/></svg></button>
    <button aria-label="PostGIS-Layer"><svg><use href="#i-pg"/></svg></button>
    <button aria-label="SpatiaLite-Layer"><svg><use href="#i-spl"/></svg></button>
    <button aria-label="MSSQL-Layer"><svg><use href="#i-ms"/></svg></button>
    <button aria-label="Oracle-Layer"><svg><use href="#i-ora"/></svg></button>
    <button aria-label="WMS-Layer"><svg><use href="#i-wms"/></svg></button>
    <button aria-label="WCS-Layer"><svg><use href="#i-wcs"/></svg></button>
    <button aria-label="WFS-Layer"><svg><use href="#i-wfs"/></svg></button>
    <button aria-label="Textdatei-Layer"><svg><use href="#i-csv"/></svg></button>
    <button class="with-drop" aria-label="Neuer Layer"><svg><use href="#i-vnew"/></svg></button>
    <span class="hgrip"></span>
  </div>

  <aside class="dock dock-left">
    <section class="panel panel-grow">
      <div class="dock-title"><span class="dots"></span><h2>Browser</h2><span class="dots"></span><button aria-label="Lösen"><svg><use href="#s-float"/></svg></button><button aria-label="Schließen"><svg><use href="#s-close"/></svg></button></div>
      <div class="minibar">
        <button aria-label="Aktualisieren"><svg><use href="#i-refresh"/></svg></button>
        <button class="labelled"><svg><use href="#b-plus"/></svg>Hinzufügen</button>
        <button aria-label="Filter"><svg><use href="#s-filter"/></svg></button>
        <button aria-label="Zusammenfalten"><svg><use href="#s-col"/></svg></button>
      </div>
      <ul class="tree box">
        <li><button class="exp" aria-label="Aufklappen"></button><svg><use href="#s-home"/></svg>Home</li>
        <li><button class="exp" aria-label="Aufklappen"></button><svg><use href="#s-star"/></svg>Favoriten</li>
        <li><button class="exp" aria-label="Aufklappen"></button><svg><use href="#s-folder"/></svg>C:/</li>
        <li><button class="exp" aria-label="Aufklappen"></button><svg><use href="#s-folder"/></svg>G:/</li>
        <li><button class="exp" aria-label="Aufklappen"></button><svg><use href="#s-folder"/></svg>H:/</li>
        <li><button class="exp" aria-label="Aufklappen"></button><svg><use href="#s-folder"/></svg>I:/</li>
        <li><button class="exp" aria-label="Aufklappen"></button><svg><use href="#s-folder"/></svg>M:/</li>
        <li><button class="exp" aria-label="Aufklappen"></button><svg><use href="#s-folder"/></svg>P:/</li>
        <li><button class="exp" aria-label="Aufklappen"></button><svg><use href="#s-folder"/></svg>R:/</li>
        <li><button class="exp" aria-label="Aufklappen"></button><svg><use href="#s-folder"/></svg>U:/</li>
        <li><svg><use href="#fan"/></svg>MSSQL</li>
        <li><svg><use href="#oracle"/></svg>Oracle</li>
        <li><svg><use href="#elephant"/></svg>PostGIS</li>
        <li><svg><use href="#feather"/></svg>SpatiaLite</li>
        <li><svg><use href="#globe"/></svg>OWS</li>
        <li><svg><use href="#globe-d"/></svg>WCS</li>
        <li><svg><use href="#wfs"/></svg>WFS</li>
        <li><svg><use href="#globe-m"/></svg>WMS</li>
      </ul>
    </section>
    <div class="hsplit"></div>
    <section class="panel">
      <div class="dock-title"><span class="dots"></span><h2>Layer</h2><span class="dots"></span><button aria-label="Lösen"><svg><use href="#s-float"/></svg></button><button aria-label="Schließen"><svg><use href="#s-close"/></svg></button></div>
      <div class="minibar">
        <button aria-label="Gruppe hinzufügen"><svg><use href="#s-group"/></svg></button>
        <button aria-label="Sichtbarkeit"><svg><use href="#s-eye"/></svg></button>
        <button aria-label="Legende filtern"><svg><use href="#s-filter"/></svg></button>
        <button aria-label="Alles aufklappen"><svg><use href="#s-exp"/></svg></button>
        <button aria-label="Alles zusammenfalten"><svg><use href="#s-col"/></svg></button>
        <button aria-label="Layer entfernen"><svg><use href="#s-rem"/></svg></button>
      </div>
      <ul class="tree box layers">
        <li><label><input type="checkbox"><svg viewBox="0 0 16 16"><circle cx="8" cy="7.500" r="4" fill="#8a8a45" stroke="#33331a"/></svg>Centroide</label></li>
        <li><label><input type="checkbox"><svg viewBox="0 0 16 16"><rect x=".5" y=".5" width="15" height="15" fill="#bdd48a" stroke="#4b5a33"/></svg>Buffer</label></li>
        <li><label><input type="checkbox"><svg viewBox="0 0 16 16"><path d="M0 8.500h16" stroke="#3fb6a4"/></svg>Output</label></li>
        <li><label><input type="checkbox"><svg viewBox="0 0 16 16"><circle cx="8" cy="7.500" r="4" fill="#e0321a" stroke="#5a150c"/></svg>Points</label></li>
        <li><label><input type="checkbox"><svg viewBox="0 0 16 16"><path d="M0 8.500h16" stroke="#a9a862"/></svg>Lines</label></li>
        <li class="current"><label><input type="checkbox" checked><svg viewBox="0 0 16 16"><rect x=".5" y=".5" width="15" height="15" fill="#5acbf2" stroke="#2b7fa0"/></svg><u>Polygon</u></label></li>
      </ul>
    </section>
    <div class="hsplit"></div>
    <section class="panel">
      <div class="dock-title"><span class="dots"></span><h2>Abfrageergebnisse</h2><span class="dots"></span><button aria-label="Lösen"><svg><use href="#s-float"/></svg></button><button aria-label="Schließen"><svg><use href="#s-close"/></svg></button></div>
      <div class="minibar">
        <button aria-label="Baum aufklappen"><svg><use href="#s-exp"/></svg></button>
        <button aria-label="Baum zusammenfalten"><svg><use href="#s-col"/></svg></button>
        <button aria-label="Neue Ergebnisse aufklappen"><svg><use href="#s-expnew"/></svg></button>
        <button aria-label="Formular"><svg><use href="#s-form"/></svg></button>
        <button aria-label="Ergebnisse löschen"><svg><use href="#i-desel"/></svg></button>
        <button class="faded" aria-label="Kopieren"><svg><use href="#i-copy"/></svg></button>
        <button aria-label="Drucken"><svg><use href="#s-print"/></svg></button>
      </div>
      <div class="box results">
        <table><thead><tr><th>Objekt</th></tr></thead><tbody></tbody></table>
        <div class="scrollbar">
          <button class="arrow arrow-l" aria-label="Links"></button><span class="thumb"></span><span class="track"></span><button class="arrow arrow-l" aria-label="Links"></button><button class="arrow arrow-r" aria-label="Rechts"></button>
        </div>
      </div>
      <div class="form-row">
        <label for="modus">Modus</label>
        <span class="combo combo-m"><select id="modus"><option>Aktueller Layer</option></select></span>
        <label class="check"><input type="checkbox">Formular autom. öffnen</label>
      </div>
      <div class="form-row">
        <label for="ansicht">Ansicht</label>
        <span class="combo combo-s"><select id="ansicht"><option>Baum</option></select></span>
        <button class="push">Hilfe</button>
      </div>
    </section>
  </aside>
  <div class="vsplit"></div>

  <section class="map" aria-label="Karte">
    <svg viewBox="354 124 1302 1008"><polygon points="545,349 566,333 613,287 656,242 702,185 768,183 833,176 897,165 968,149 974,177 993,235 1016,294 1042,353 1073,411 1107,465 1146,520 1192,575 1240,627 1287,672 1338,713 1388,749 1442,783 1465,795 1458,812 1436,870 1417,933 1403,994 1392,1057 1387,1107 1368,1044 1357,1008 1333,947 1307,892 1277,835 1245,783 1207,729 1164,678 1121,631 1072,586 1025,547 970,508 913,473 859,443 800,417 740,395 677,376 613,361" fill="#6ae7f0" stroke="#10282a" stroke-width="1"/></svg>
  </section>
  <div class="vsplit"></div>

  <aside class="dock dock-right">
    <div class="dock-title"><span class="dots"></span><h2>Verarbeitungswerkzeuge</h2><span class="dots"></span><button aria-label="Lösen"><svg><use href="#s-float"/></svg></button><button aria-label="Schließen"><svg><use href="#s-close"/></svg></button></div>
    <input class="search" type="search" placeholder="Suchen..." aria-label="Suchen">
    <ul class="tree box">
      <li><button class="exp open" aria-label="Zuklappen"></button>Zuletzt verwendete Algorithmen</li>
      <li class="sub"><svg><use href="#s-qgis"/></svg>Polygon centroids</li>
      <li class="sub"><svg><use href="#s-saga"/></svg>Convert polygons to lines</li>
      <li class="sub"><svg><use href="#s-saga"/></svg>Convert lines to points</li>
      <li class="sub"><svg><use href="#s-qgis"/></svg>Distance to nearest hub</li>
      <li class="sub sub-last"><svg><use href="#s-qgis"/></svg>Fixed distance buffer</li>
      <li><button class="exp" aria-label="Aufklappen"></button><svg><use href="#s-gdal"/></svg>GDAL/OGR [34 geoalgorithms]</li>
      <li class="tight"><button class="exp" aria-label="Aufklappen"></button><svg><use href="#s-grass"/></svg>GRASS commands [168 geoalgorithms]</li>
      <li><button class="exp" aria-label="Aufklappen"></button><svg><use href="#s-model"/></svg>Modelle [0 geoalgorithms]</li>
      <li><button class="exp" aria-label="Aufklappen"></button><svg><use href="#s-otb"/></svg>Orfeo Toolbox (Image analysis) [82 geo...</li>
      <li><button class="exp" aria-label="Aufklappen"></button><svg><use href="#s-qgis"/></svg>QGIS geoalgorithms [85 geoalgorithms]</li>
      <li><button class="exp" aria-label="Aufklappen"></button><svg><use href="#s-saga"/></svg>SAGA [227 geoalgorithms]</li>
      <li><button class="exp" aria-label="Aufklappen"></button><svg><use href="#s-script"/></svg>Skripte [0 geoalgorithms]</li>
    </ul>
    <span class="combo combo-full"><select aria-label="Oberfläche"><option>Advanced interface</option></select></span>
  </aside>
</main>

<footer class="status">
  <button class="sq" aria-label="Koordinatenanzeige"><svg viewBox="0 0 16 16"><path d="M4 1c3 0 5 3 4 6s1 4 4 4c2 1 2 4-1 4-5 1-9-4-9-9 0-3 0-4 2-5z" fill="#ddd" stroke="#222"/><path d="M4 3l5 8M7 1 3 10M13 2c-3 1-3 4-3 6M6 14l6-5" stroke="#222" stroke-width="1.300" fill="none"/></svg></button>
  <label for="koord">Koordinate:</label>
  <input id="koord" class="coord" type="text" value="389834.4,5748087.7">
  <label for="mass">Maßstab</label>
  <span class="combo combo-scale"><select id="mass"><option>1:1.434</option></select></span>
  <label class="check"><input type="checkbox" checked>Zeichnen</label>
  <span class="epsg">EPSG:25832</span>
  <button class="sq" aria-label="KBS"><svg viewBox="0 0 16 16"><circle cx="8" cy="8" r="7" fill="#555" stroke="#222"/><circle cx="8" cy="8" r="3.500" fill="#ddd" stroke="#111"/><path d="M8 0v4M8 12v4M0 8h4M12 8h4" stroke="#ddd" stroke-width="1.500"/><path d="M8 5v6M5 8h6" stroke="#888"/></svg></button>
  <button class="sq" aria-label="Meldungen"><svg viewBox="0 0 16 16"><path d="M8 1.500 15 14.500H1z" fill="#fbf6b8" stroke="#a3a06a" stroke-width="1.200"/><path d="M8 6v4.500M8 12v1.300" stroke="#333" stroke-width="1.400"/></svg></button>
</footer>
</div>
</body>
</html>
```

FILE: styles.css
```css
:root {
  --ui: Roboto, "DejaVu Sans Condensed", sans-serif;
  --bg: #efefef;
  --line: #b9b9b9;
}

* { box-sizing: border-box; }

body {
  margin: 0;
  min-height: 100vh;
  display: flex;
  flex-direction: column;
  background: var(--bg);
  color: #111;
  font: 11px/16px var(--ui);
}

button, input, select { font: inherit; color: inherit; margin: 0; }
button { border: 0; padding: 0; background: none; display: flex; align-items: center; justify-content: center; }
svg { display: block; flex: none; }
.defs { width: 0; height: 0; position: absolute; }
h2 { margin: 0; font: inherit; }
ul { margin: 0; padding: 0; list-style: none; }

/* title bar */
.titlebar {
  height: 22px;
  display: flex;
  align-items: center;
  gap: 6px;
  border-bottom: 1px solid #1f3f78;
  background:
    radial-gradient(ellipse 90px 20px at 70px 10px, rgba(255, 255, 255, .6), rgba(255, 255, 255, 0)),
    linear-gradient(105deg, #8fb2dd 0, #77a0d6 110px, #3b76c4 160px, #2d63b4 300px, #2a5dae 700px, #3a72c4 800px, #3a70c2 1080px, #2559ab 1130px, #3a71c4 1190px, #2f66b8 1240px, #3168bb 1700px, #5c8fd2 100%);
}
.titlebar .i16 { width: 15px; height: 15px; }
.titlebar-text { font-size: 12px; flex: 1; }
.winbtns { display: flex; align-self: flex-start; margin-right: 3px; border: 1px solid #1c2f50; border-top: 0; border-radius: 0 0 5px 5px; overflow: hidden; }
.wb { width: 27px; height: 17px; border-right: 1px solid #2c4670; background: linear-gradient(#b4cbea 0 45%, #5f86bd 50%, #86aadb); }
.wb-min { width: 28px; }
.wb-close { width: 46px; border-right: 0; background: linear-gradient(#e0a196 0 45%, #b3251c 50%, #d76f56); }

.window { flex: 1; display: flex; flex-direction: column; border-left: 2px solid #47618c; }

/* menu */
.menubar { height: 22px; display: flex; align-items: center; gap: 14px; padding: 3px 0 0 7px; background: linear-gradient(#f6f6f6, #efefef); }
.menubar a { color: inherit; text-decoration: none; }

/* tool bars */
.toolbar { height: 39px; display: flex; align-items: center; border-top: 1px solid var(--line); box-shadow: inset 0 1px #fafafa; }
.grip, .dots, .hgrip, .hsplit, .vsplit {
  background-image: radial-gradient(circle at 2px 2px, #c4c4c4 1px, transparent 1px), radial-gradient(circle at 2px 2px, #c4c4c4 1px, transparent 1px);
  background-size: 6px 6px;
  background-position: 0 0, 3px 3px;
}
.grip { width: 6px; height: 30px; margin: 0 1px 0 7px; }
.grip:first-child { margin-left: 2px; }
.tb { width: 35px; height: 34px; position: relative; border-radius: 3px; }
.tb svg { width: 24px; height: 24px; }
.tb.active { background: #dadada; border: 1px solid #8d8d8d; }
.tb.drop { width: 47px; justify-content: flex-start; padding-left: 6px; gap: 6px; }
.tb.drop::after { content: ""; border: 5px solid transparent; border-top-color: #000; border-bottom: 0; }
.tb.drop.off::after { border-top-color: #999; }
.tiny { position: absolute; right: 3px; bottom: 3px; border: 3px solid transparent; border-top-color: #777; border-bottom: 0; }
.tag { font: bold 8px "DejaVu Sans Condensed", sans-serif; fill: #3a3520; }
.tag-off { fill: #8a8a8a; }
.csw { font: bold 8px "DejaVu Sans Condensed", sans-serif; fill: #444; }

/* work area */
.work { flex: 1; display: flex; border-top: 2px solid var(--line); }
.layerbar { width: 49px; padding-top: 5px; display: flex; flex-direction: column; align-items: center; border-right: 1px solid var(--line); box-shadow: inset 5px 0 5px -4px #bbb; }
.layerbar button { width: 34px; height: 34px; }
.layerbar svg { width: 24px; height: 24px; }
.layerbar .with-drop { width: 47px; gap: 5px; }
.with-drop::after { content: ""; border: 5px solid transparent; border-top-color: #000; border-bottom: 0; }
.hgrip { width: 42px; height: 5px; }
.layerbar .hgrip:last-child { margin-top: 9px; }

.dock { display: flex; flex-direction: column; }
.dock-left { width: 295px; padding: 0 0 0 2px; }
.dock-right { width: 256px; }
.panel { display: flex; flex-direction: column; }
.panel-grow { flex: 1; }
.box { background: #fff; border: 1px solid var(--line); border-radius: 2px; box-shadow: 0 0 0 1px #dcdcdc inset; }

.dock-title { height: 17px; display: flex; align-items: center; gap: 2px; padding: 0 1px 0 3px; }
.dock-title h2 { padding: 0 8px; font-family: "Liberation Sans Narrow", "Roboto Condensed", Roboto, sans-serif; }
.dock-title .dots { flex: 1; height: 6px; }
.dock-title button { width: 14px; height: 14px; background: #fff; border: 1px solid #777; border-radius: 3px; }
.dock-title button svg { width: 12px; height: 12px; }

.minibar { height: 30px; display: flex; align-items: center; gap: 16px; padding-left: 9px; }
.minibar svg { width: 16px; height: 16px; }
.minibar .labelled { gap: 5px; margin: 0 2px 0 1px; }
.minibar .labelled svg { width: 14px; height: 14px; }
.faded { opacity: .6; }

/* trees */
.tree { padding: 2px 0; }
.panel-grow .tree, .dock-right .tree { flex: 1; }
.panel-grow .tree { margin-top: 2px; }
.dock-right .tree { padding: 0 0 0 1px; }
.tree li { position: relative; height: 16px; display: flex; align-items: center; padding-left: 23px; gap: 5px; white-space: nowrap; overflow: hidden; }
.tree svg { width: 16px; height: 16px; }
.tree li::before { content: ""; position: absolute; left: 9px; top: 0; height: 16px; width: 10px; border-left: 1px dotted #999; background: linear-gradient(90deg, #aaa 50%, transparent 50%) 0 7px / 2px 1px repeat-x; }
.tree li:last-child::before { height: 8px; }
.exp { position: absolute; left: 5px; top: 3px; width: 9px; height: 9px; border: 1px solid #9a9a9a; background: linear-gradient(#444, #444) 3px 1px / 1px 5px no-repeat, linear-gradient(#444, #444) 1px 3px / 5px 1px no-repeat, #fff; }
.exp.open { background: linear-gradient(#444, #444) 1px 3px / 5px 1px no-repeat, #fff; }
.tree li.sub { padding-left: 43px; }
.tree li.sub::before { background: none; }
.tree li.sub::after { content: ""; position: absolute; left: 30px; top: 0; width: 9px; height: 16px; border-left: 1px dotted #999; background: linear-gradient(90deg, #aaa 50%, transparent 50%) 0 7px / 2px 1px repeat-x; }
.tree li.sub-last::after { height: 8px; }
.tree li.tight { gap: 2px; }

.layers { height: 179px; font: bold 11px/16px "DejaVu Sans Condensed", sans-serif; margin-top: 4px; }
.layers label { display: flex; align-items: center; gap: 6px; }
.layers .current { background: var(--bg); }

input[type="checkbox"] { appearance: none; width: 13px; height: 13px; border: 1px solid #c0c0c0; background: linear-gradient(#fff, #f4f4f4); display: grid; place-items: center; }
input[type="checkbox"]:checked::before { content: "✖"; font: 13px/11px "DejaVu Sans", sans-serif; color: #000; }

.hsplit { height: 6px; width: 96px; margin: 0 auto; }
.vsplit { width: 7px; height: 336px; align-self: center; background-clip: content-box; padding: 0 1px; }

/* results */
.results { height: 119px; margin-top: 4px; padding: 1px; display: flex; flex-direction: column; }
.results table { width: 100%; border-collapse: separate; border-spacing: 0; }
.results th { height: 21px; padding: 0 3px; text-align: left; font-weight: normal; border: 1px solid #777; border-radius: 2px; background: linear-gradient(#fbfbfb, #e2e2e2); }
.scrollbar { margin-top: auto; height: 16px; display: flex; background: #f3f3f3; }
.scrollbar .arrow { width: 16px; border: 1px solid #777; border-radius: 2px; background: linear-gradient(#fff, #e6e6e6); }
.arrow::before { content: ""; border: 4px solid transparent; }
.arrow-l::before { border-right: 5px solid #000; border-left: 0; }
.arrow-r::before { border-left: 5px solid #000; border-right: 0; }
.thumb { flex: 179; display: flex; align-items: center; justify-content: center; border: 1px solid #888; border-radius: 2px; background: linear-gradient(#fdfdfd, #dedede); }
.thumb::before { content: ""; width: 20px; height: 12px; background: radial-gradient(circle at 1px 1px, #b5b5b5 1px, transparent 1px) 0 0 / 4px 4px; }
.track { flex: 63; border-top: 1px dotted #bbb; }

.form-row { display: flex; align-items: center; gap: 5px; height: 29px; padding: 0 5px 0 3px; }
.form-row:last-child { margin-bottom: 6px; }
.check { display: flex; align-items: center; gap: 5px; }

.combo { position: relative; display: block; height: 20px; border: 1px solid #b3b3b3; border-radius: 3px; background: linear-gradient(#fafafa, #e4e4e4); }
.combo select { appearance: none; width: 100%; height: 100%; border: 0; background: none; padding: 0 20px 0 4px; outline: 0; }
.combo::before { content: ""; position: absolute; right: 15px; top: 0; bottom: 0; border-left: 1px solid #c2c2c2; pointer-events: none; }
.combo::after { content: ""; position: absolute; right: 4px; top: 7px; border: 4px solid transparent; border-top: 5px solid #000; border-bottom: 0; pointer-events: none; }
.combo-m { width: 103px; margin-right: 2px; }
.combo-s { width: 72px; }
.combo-full { margin-top: 4px; }
.combo-full select { padding-left: 3px; }
.push { margin-left: auto; width: 37px; height: 22px; border: 1px solid #777; border-radius: 3px; background: linear-gradient(#fff, #f0f0f0); }

/* map: the drawing fills the canvas and never stretches it */
.map { flex: 1; position: relative; background: #fff; border: 1px solid var(--line); border-top: 0; border-radius: 0 0 2px 2px; overflow: hidden; }
.map svg { position: absolute; inset: 0; width: 100%; height: 100%; }

/* processing */
.search { appearance: none; height: 25px; margin: 2px 0; padding: 0 4px; border: 1px solid var(--line); border-radius: 3px; background: #fff; }
.search::placeholder { color: #aaa; font-style: italic; opacity: 1; }

/* status bar */
.status { height: 26px; display: flex; align-items: center; justify-content: flex-end; gap: 9px; padding: 0 1px; }
.sq { width: 20px; height: 20px; border: 1px solid #8a8a8a; border-radius: 3px; background: linear-gradient(#fff, #e4e4e4); }
.sq svg { width: 16px; height: 16px; }
.status .sq:last-child { margin-left: -3px; }
.coord { width: 300px; height: 20px; border: 1px solid var(--line); border-radius: 3px; background: #fff; text-align: center; }
.combo-scale { width: 88px; background: #fff; margin-left: 2px; }
.combo-scale::before { background: #ececec; width: 15px; right: 0; }
.epsg { margin-left: 5px; }
.status .check { margin-left: -3px; }
```
